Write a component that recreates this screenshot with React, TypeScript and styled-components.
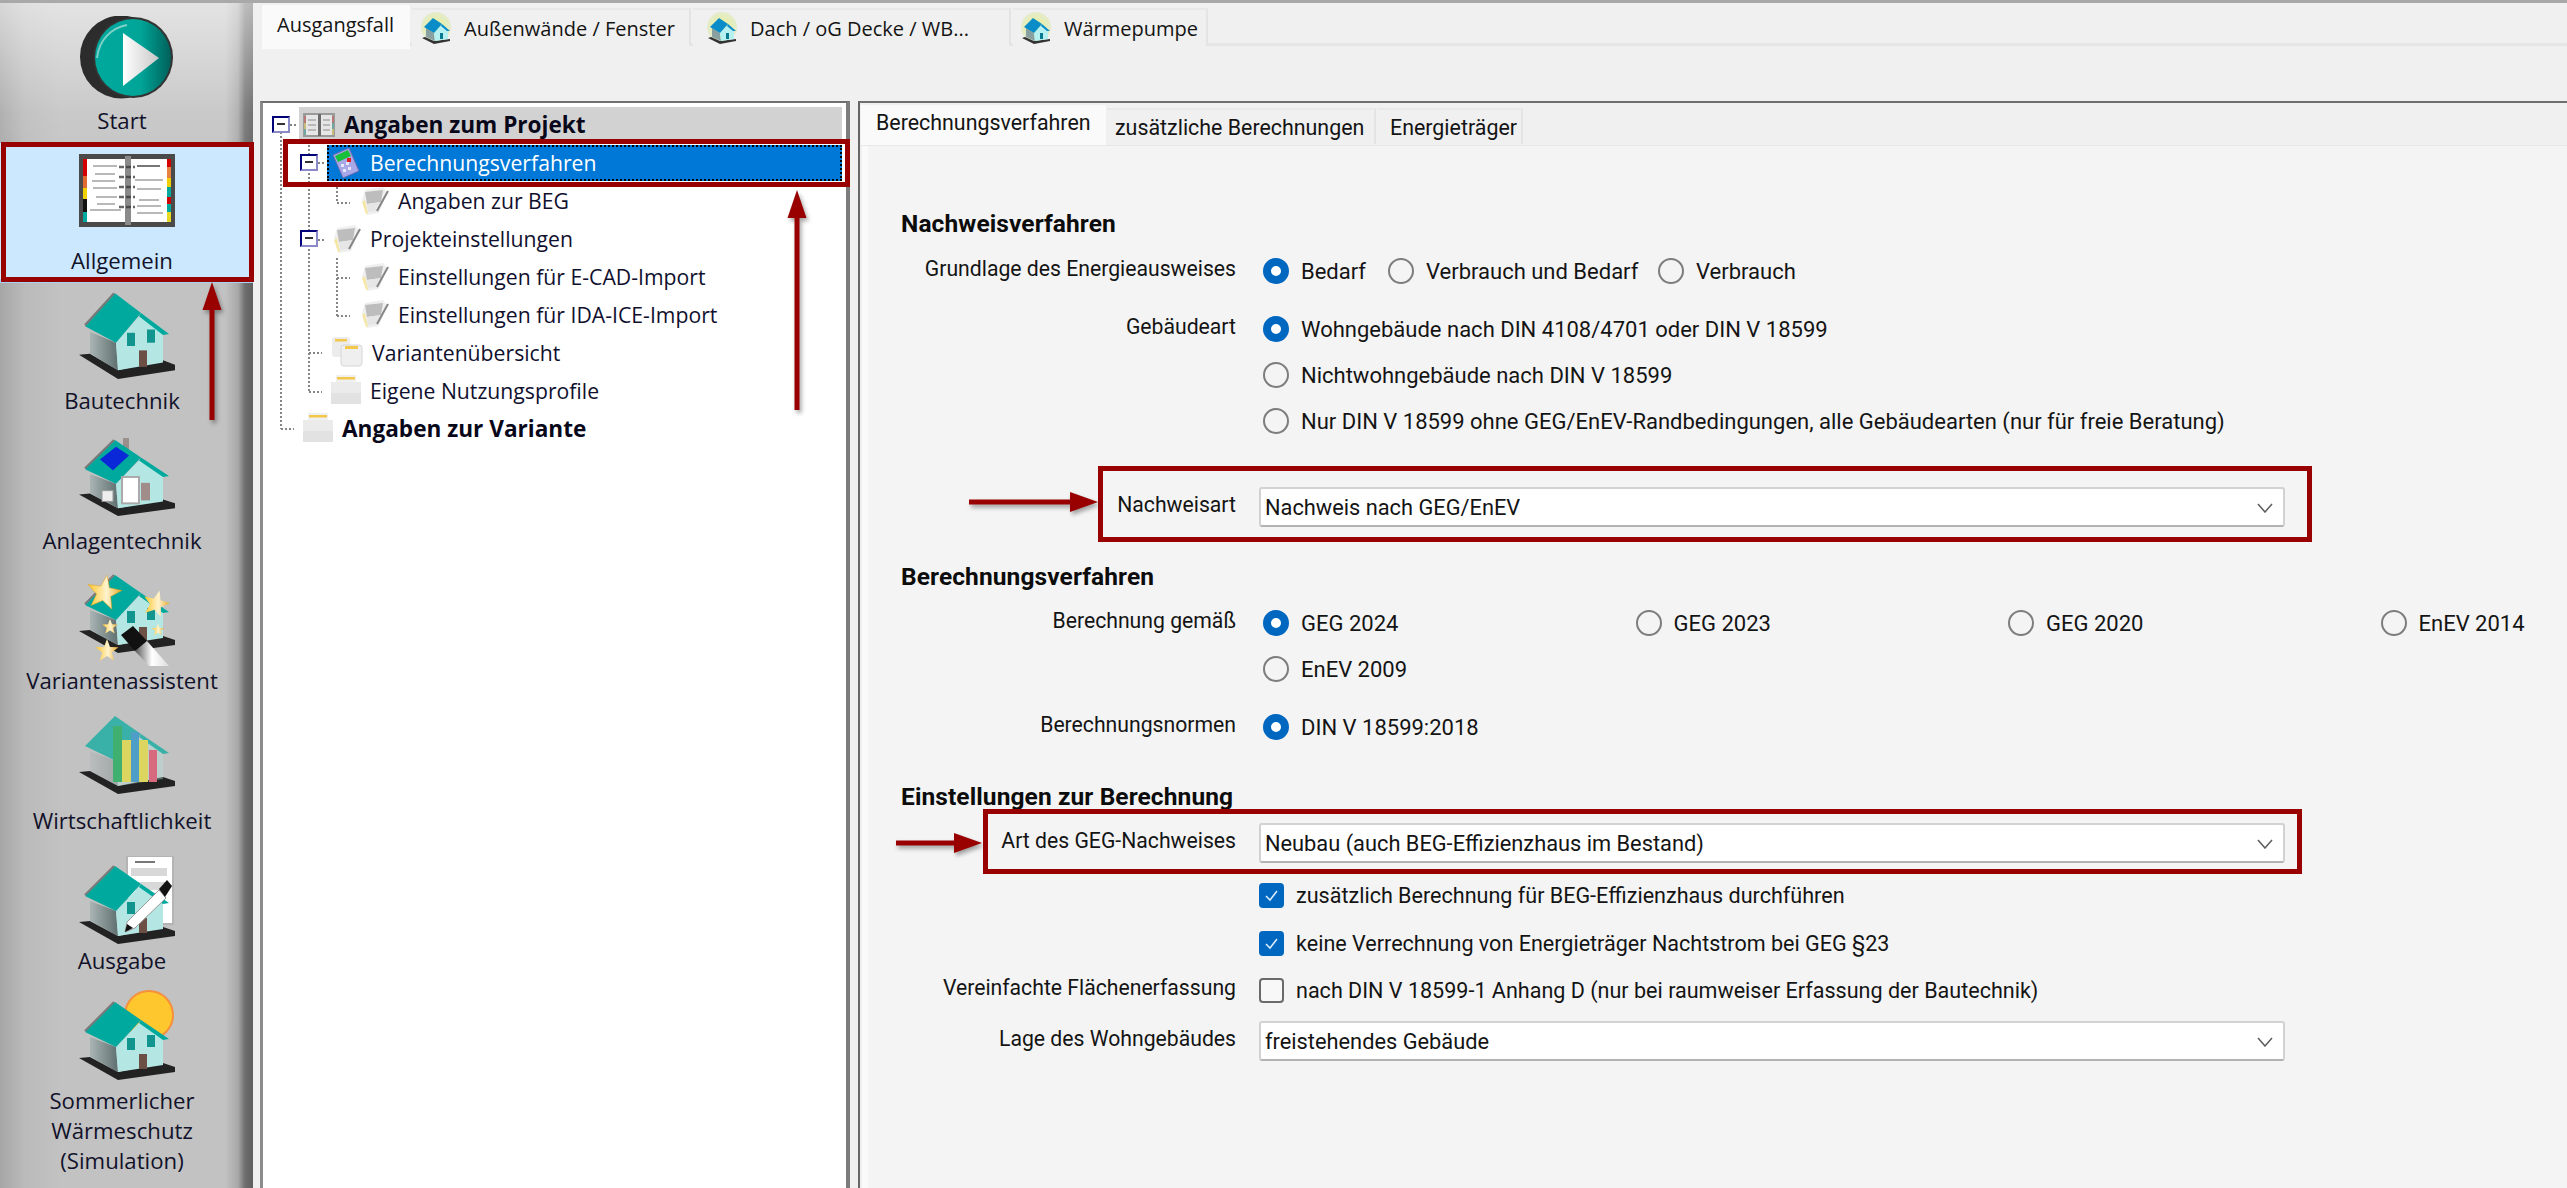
import React from "react";
import styled, { createGlobalStyle } from "styled-components";

const Global = createGlobalStyle`
  html, body { margin: 0; padding: 0; background: #f0f0f0; }
  body { font-family: "Roboto", "Liberation Sans", sans-serif; color: #141414; }
  * { box-sizing: border-box; }
`;

const Page = styled.div`
  position: relative;
  width: 2567px;
  height: 1188px;
  overflow: hidden;
  display: flex;
  border-top: 3px solid #a9a9a9;
  background: #f0f0f0;
`;

/* ---------- sidebar ---------- */
const Sidebar = styled.nav`
  flex: 0 0 253px;
  display: flex;
  flex-direction: column;
  background:
    linear-gradient(to bottom, rgba(255,255,255,.55) 0, rgba(255,255,255,.12) 110px, rgba(255,255,255,0) 200px),
    linear-gradient(to right, #a6a6a6 0, #bababa 24px, #c2c2c2 60px, #c2c2c2 225px, #a8a8a8 238px, #6e6e6e 245px, #5f5f5f 253px);
`;
const NavItem = styled.div<{ $active?: boolean }>`
  flex: 0 0 140px;
  padding-right: 9px;
  text-align: center;
  background: ${(p) => (p.$active ? "#cce8ff" : "transparent")};
  box-shadow: ${(p) => (p.$active ? "inset 0 -8px 0 -4px #a8d2f5" : "none")};
`;
const NavIcon = styled.div<{ $top: number }>`
  height: 103px;
  padding-top: ${(p) => p.$top}px;
  padding-left: 9px;
  display: flex;
  justify-content: center;
  align-items: flex-start;
`;
const NavLabel = styled.div`
  font-family: "Open Sans", "Liberation Sans", sans-serif;
  font-size: 22.2px;
  line-height: 30px;
  color: #12122a;
`;

/* ---------- main ---------- */
const Main = styled.main`
  flex: 1;
  min-width: 0;
  display: flex;
  flex-direction: column;
  padding-left: 7px;
`;
const TopTabs = styled.div`
  flex: 0 0 98px;
  display: flex;
  align-items: flex-start;
  padding: 2px 0 0 2px;
`;
const TopStrip = styled.div`
  flex: 1;
  height: 41px;
  display: flex;
  align-items: flex-start;
  border-bottom: 3px solid #e6e6e6;
`;
const TopActive = styled.div`
  flex: 0 0 148px;
  height: 44px;
  background: #fafafa;
  padding: 0 0 0 15px;
  font-size: 20px;
  line-height: 40px;
  font-family: "Open Sans", sans-serif;
`;
const TopTab = styled.div<{ $w: number; $pad: number }>`
  flex: 0 0 ${(p) => p.$w}px;
  height: 38px;
  margin-top: 3px;
  margin-left: 2px;
  display: flex;
  align-items: center;
  gap: 12px;
  padding-left: ${(p) => p.$pad}px;
  background: #f0f0f0;
  border-right: 2px solid #e4e4e4;
  border-top: 2px solid #e8e8e8;
  white-space: nowrap;
  overflow: hidden;
  font-family: "Open Sans", sans-serif;
  font-size: 20px;
`;
const Work = styled.div`
  flex: 1;
  min-height: 0;
  display: flex;
  gap: 8px;
`;

/* ---------- tree ---------- */
const Tree = styled.section`
  position: relative;
  flex: 0 0 590px;
  background: #fff;
  border-top: 2px solid #6f6f6f;
  border-left: 3px solid #8c8c8c;
  border-right: 4px solid #7c7c7c;
  padding: 3px 4px 0 0;
  font-family: "Open Sans", "Liberation Sans", sans-serif;
  font-size: 21.2px;
`;
const TreeLines = styled.svg`
  position: absolute;
  left: 0;
  top: 0;
  width: 583px;
  height: 420px;
`;
const TreeRow = styled.div<{ $depth: number }>`
  position: relative;
  height: 37.9px;
  display: flex;
  align-items: center;
  padding-left: ${(p) => 9 + 28 * p.$depth}px;
`;
const Expander = styled.span<{ $hidden?: boolean }>`
  flex: 0 0 18px;
  height: 17px;
  position: relative;
  background: #fff;
  border: 2px solid;
  border-color: #00007a #8a8ac8 #8a8ac8 #00007a;
  visibility: ${(p) => (p.$hidden ? "hidden" : "visible")};
  &::after {
    content: "";
    position: absolute;
    left: 3px;
    right: 3px;
    top: 5px;
    height: 2px;
    background: #333;
  }
`;
const TreeBody = styled.div<{ $state?: "root" | "selected" }>`
  flex: 1;
  height: 36px;
  margin-left: 9px;
  padding-left: 4px;
  display: flex;
  align-items: center;
  gap: 9px;
  color: ${(p) => (p.$state === "selected" ? "#fff" : "#10102e")};
  background: ${(p) => (p.$state === "selected" ? "#0078d7" : p.$state === "root" ? "#d2d2d2" : "transparent")};
  outline: ${(p) => (p.$state === "selected" ? "2px dotted #000" : "none")};
  outline-offset: -2px;
`;
const TreeText = styled.span<{ $bold?: boolean }>`
  font-weight: ${(p) => (p.$bold ? 700 : 400)};
  font-size: ${(p) => (p.$bold ? "22.6px" : "inherit")};
  color: ${(p) => (p.$bold ? "#08081a" : "inherit")};
  white-space: nowrap;
`;

/* ---------- right pane ---------- */
const Pane = styled.section`
  flex: 1;
  min-width: 0;
  display: flex;
  flex-direction: column;
  border-top: 2px solid #6f6f6f;
  border-left: 2px solid #666;
`;
const PaneTabs = styled.div`
  flex: 0 0 42px;
  display: flex;
  align-items: flex-start;
  padding: 2px 0 0 1px;
  font-size: 21.4px;
  border-bottom: 1px solid #e8e8e8;
`;
const PaneTabActive = styled.div`
  flex: 0 0 245px;
  height: 40px;
  background: #fafafa;
  padding-left: 15px;
  line-height: 36px;
`;
const PaneTab = styled.div<{ $w: number; $pad: number }>`
  flex: 0 0 ${(p) => p.$w}px;
  height: 36px;
  margin-top: 3px;
  margin-left: 1px;
  padding-left: ${(p) => p.$pad}px;
  line-height: 36px;
  background: #f0f0f0;
  border-top: 2px solid #e8e8e8;
  border-right: 2px solid #e4e4e4;
  white-space: nowrap;
`;
const Content = styled.div`
  flex: 1;
  margin-left: 2px;
  padding-top: 60px;
  background: #f4f4f4;
  border-left: 6px solid #fafafa;
`;
const Heading = styled.h3<{ $h: number }>`
  margin: 0;
  height: ${(p) => p.$h}px;
  padding: 0 0 2px 33px;
  display: flex;
  align-items: center;
  font-size: 24.5px;
  letter-spacing: 0.1px;
  font-weight: 700;
  color: #0c0c0c;
`;
const Row = styled.div<{ $h: number }>`
  height: ${(p) => p.$h}px;
  display: flex;
  align-items: center;
`;
const Label = styled.label`
  flex: 0 0 368px;
  text-align: right;
  margin-top: -6px;
  white-space: nowrap;
  font-size: 21.2px;
`;
const Controls = styled.div`
  flex: 1;
  margin-left: 23px;
  display: flex;
  align-items: center;
  min-width: 0;
`;
const Option = styled.span<{ $w?: number }>`
  flex: 0 0 ${(p) => (p.$w ? `${p.$w}px` : "auto")};
  display: flex;
  align-items: center;
  gap: 12px;
  white-space: nowrap;
  padding-left: 4px;
  font-size: 22px;
`;
const Radio = styled.span<{ $on?: boolean }>`
  flex: 0 0 26px;
  height: 26px;
  border-radius: 50%;
  background: ${(p) => (p.$on ? "#fff" : "transparent")};
  border: ${(p) => (p.$on ? "8px solid #0067c0" : "2px solid #7d7d7d")};
`;
const CheckOption = styled.span`
  display: flex;
  align-items: center;
  gap: 12px;
  white-space: nowrap;
  font-size: 21.55px;
`;
const CheckBox = styled.span<{ $on?: boolean }>`
  flex: 0 0 25px;
  height: 25px;
  border-radius: 4px;
  display: flex;
  align-items: center;
  justify-content: center;
  background: ${(p) => (p.$on ? "#0067c0" : "#f8f8f8")};
  border: 2px solid ${(p) => (p.$on ? "#0067c0" : "#6a6a6a")};
`;
const Select = styled.div`
  flex: 0 0 1026px;
  height: 40px;
  display: flex;
  align-items: center;
  justify-content: space-between;
  padding: 1px 10px 0 4px;
  background: #fff;
  border: 2px solid #d2d2d2;
  border-bottom: 2px solid #b2b2b2;
  border-radius: 3px;
  font-size: 21.8px;
`;

/* ---------- annotations, lying over the content ---------- */
const RedBox = styled.div<{ $x: number; $y: number; $w: number; $h: number }>`
  position: absolute;
  left: ${(p) => p.$x}px;
  top: ${(p) => p.$y - 3}px;
  width: ${(p) => p.$w}px;
  height: ${(p) => p.$h}px;
  border: 5px solid #990000;
  pointer-events: none;
`;
const ArrowSvg = styled.svg<{ $x: number; $y: number }>`
  position: absolute;
  left: ${(p) => p.$x}px;
  top: ${(p) => p.$y - 3}px;
  overflow: visible;
  filter: drop-shadow(2px 3px 2px rgba(0, 0, 0, 0.35));
`;
const SharedDefs = styled.svg`
  position: absolute;
  width: 0;
  height: 0;
`;

/* ---------- drawings ---------- */
const Defs = () => (
  <SharedDefs aria-hidden>
    <defs>
      <linearGradient id="wallL" x1="0" x2="1">
        <stop offset="0" stopColor="#aab4b4" />
        <stop offset="1" stopColor="#5f7070" />
      </linearGradient>
      <linearGradient id="teal" x1="0" x2="1">
        <stop offset="0" stopColor="#00a99d" />
        <stop offset=".6" stopColor="#00a598" />
        <stop offset="1" stopColor="#00605a" />
      </linearGradient>
      <linearGradient id="tri" x1="0" x2="1">
        <stop offset="0" stopColor="#ffffff" />
        <stop offset="1" stopColor="#c8c8c8" />
      </linearGradient>
      <linearGradient id="star" x1="0" x2="1">
        <stop offset="0" stopColor="#ffc62a" />
        <stop offset=".55" stopColor="#fff3cf" />
        <stop offset="1" stopColor="#e8a820" />
      </linearGradient>
      <linearGradient id="brush" x1="0" x2="1">
        <stop offset="0" stopColor="#555" />
        <stop offset=".5" stopColor="#fff" />
        <stop offset="1" stopColor="#ddd" />
      </linearGradient>
      <radialGradient id="glow">
        <stop offset="0" stopColor="#f4f48a" />
        <stop offset="1" stopColor="#d8e8a8" stopOpacity=".5" />
      </radialGradient>
    </defs>
  </SharedDefs>
);

const starPts = (cx: number, cy: number, r: number, rot = -90) => {
  const pts: string[] = [];
  for (let i = 0; i < 10; i++) {
    const rad = i % 2 ? r * 0.42 : r;
    const a = ((rot + i * 36) * Math.PI) / 180;
    pts.push(`${(cx + rad * Math.cos(a)).toFixed(1)},${(cy + rad * Math.sin(a)).toFixed(1)}`);
  }
  return pts.join(" ");
};

const HouseBody = ({ fade }: { fade?: boolean }) => (
  <>
    <polygon points="0,58 39,80 96,72 96,67 84,63 39,72 11,57" fill="#222" />
    <polygon points="11,37 37,47 39,72 11,57" fill="url(#wallL)" opacity={fade ? 0.35 : 1} />
    <polygon points="37,47 61,22 84,39 84,65 39,72" fill="#b4e6e3" opacity={fade ? 0.35 : 1} />
    <polygon points="6,32 36,2 62,20 37,47" fill="#00a99d" opacity={fade ? 0.7 : 1} />
    <polyline points="6,31 35,2" stroke="#777" strokeWidth="2" fill="none" opacity={fade ? 0 : 1} />
    <polygon points="62,20 90,39 84,40 60,23" fill="#00a99d" opacity={fade ? 0.7 : 1} />
  </>
);
const Openings = () => (
  <>
    <rect x="48" y="38" width="8" height="12" fill="#12958f" />
    <rect x="68" y="35" width="8" height="12" fill="#12958f" />
    <rect x="60" y="54" width="8" height="15" fill="#6c4f45" />
  </>
);

const StartIcon = () => (
  <svg width="95" height="83" viewBox="0 0 95 83">
    <ellipse cx="42" cy="41" rx="41" ry="41.5" fill="#2c2c2c" />
    <ellipse cx="54" cy="41.5" rx="40" ry="40.5" fill="#333" />
    <ellipse cx="54" cy="41.5" rx="38" ry="38.5" fill="url(#teal)" />
    <path d="M18 42 C 20 24, 32 12, 48 9" stroke="#7fd0c8" strokeWidth="2" fill="none" />
    <polygon points="44,17 80,42 44,70" fill="url(#tri)" />
  </svg>
);

const BookIcon = () => (
  <svg width="96" height="73" viewBox="0 0 96 73">
    <rect x="0" y="0" width="96" height="73" fill="#4a4a4a" />
    <rect x="8" y="5" width="40" height="63" fill="#fff" />
    <rect x="52" y="5" width="36" height="63" fill="#fff" />
    {[["#d40000", 5, 17], ["#e06a30", 22, 12], ["#f0d000", 34, 11], ["#111", 45, 13], ["#00a99d", 58, 10]].map(([c, y, h]) => (
      <rect key={String(y)} x="4" y={y as number} width="4" height={h as number} fill={c as string} />
    ))}
    {[["#d40000", 5, 8], ["#e88040", 13, 11], ["#f0d000", 24, 9], ["#00a99d", 33, 10], ["#d40000", 43, 7], ["#00a99d", 50, 8], ["#e8d820", 58, 10]].map(([c, y, h]) => (
      <rect key={String(y)} x="88" y={y as number} width="4" height={h as number} fill={c as string} />
    ))}
    <rect x="46" y="2" width="6" height="69" fill="#8a8a8a" />
    <g stroke="#b8b8b8" strokeWidth="2">
      <path d="M14 12H38M16 20H36M13 27H36M14 34H38M17 43H38M18 50H36M11 56H42" />
      <path d="M58 12H81" stroke="#777" />
      <path d="M56 26H84M58 35H82M60 46H80M58 52H82M58 59H84" />
    </g>
    <g stroke="#333" strokeWidth="2.4" strokeDasharray="5 2">
      <path d="M40 13H56M40 23H56M40 33H56M40 43H56M40 53H56" strokeOpacity=".75" />
    </g>
  </svg>
);

const BauIcon = () => (
  <svg width="96" height="88" viewBox="0 0 96 80" preserveAspectRatio="none">
    <HouseBody />
    <Openings />
  </svg>
);
const AnlagenIcon = () => (
  <svg width="96" height="78" viewBox="0 0 96 80" preserveAspectRatio="none">
    <rect x="44" y="0" width="6" height="22" fill="#9a8f8a" />
    <HouseBody />
    <polygon points="21,22 37,9 50,18 34,33" fill="#0a28d8" />
    <rect x="43" y="40" width="17" height="27" fill="#fff" stroke="#aaa" strokeWidth="2" />
    <rect x="62" y="46" width="9" height="18" fill="#a08c88" />
    <rect x="23" y="54" width="11" height="11" fill="#eee" stroke="#999" />
  </svg>
);
const VarIcon = () => (
  <svg width="96" height="93" viewBox="0 0 96 93">
    <HouseBody />
    <Openings />
    <polygon points={starPts(25, 20, 18, -80)} fill="url(#star)" stroke="#e0a010" strokeWidth=".5" />
    <polygon points={starPts(77, 31, 14, -75)} fill="url(#star)" />
    <polygon points={starPts(31, 54, 8)} fill="url(#star)" />
    <polygon points={starPts(79, 57, 6.5)} fill="url(#star)" />
    <polygon points={starPts(28, 78, 12)} fill="url(#star)" />
    <polygon points="42,62 54,53 68,68 56,78" fill="#111" />
    <polygon points="56,78 68,68 90,93 70,93" fill="url(#brush)" />
  </svg>
);
const WirtIcon = () => (
  <svg width="96" height="80" viewBox="0 0 96 80">
    <HouseBody fade />
    <rect x="34" y="12" width="9" height="56" fill="#3fb070" />
    <rect x="43" y="26" width="9" height="42" fill="#dcd660" />
    <rect x="52" y="18" width="8" height="50" fill="#4f9ec8" />
    <rect x="60" y="26" width="9" height="42" fill="#dcd660" />
    <rect x="70" y="36" width="8" height="32" fill="#d86a80" />
  </svg>
);
const AusgabeIcon = () => (
  <svg width="96" height="88" viewBox="0 0 96 88">
    <rect x="48" y="0" width="46" height="68" fill="#fff" stroke="#b4b4b4" strokeWidth="2" />
    <path d="M56 6H76" stroke="#777" strokeWidth="2" />
    <rect x="52" y="12" width="36" height="8" fill="#d8d8d8" />
    <rect x="52" y="26" width="36" height="8" fill="#d8d8d8" />
    <g transform="translate(0,8)">
      <HouseBody />
      <rect x="48" y="38" width="8" height="12" fill="#12958f" />
      <rect x="60" y="54" width="8" height="15" fill="#6c4f45" />
    </g>
    <polygon points="46,76 48,66 80,34 87,42 56,72" fill="#fff" stroke="#999" />
    <polygon points="46,76 48,68 54,72" fill="#111" />
    <polygon points="80,33 88,24 93,30 86,41" fill="#111" />
  </svg>
);
const SommerIcon = () => (
  <svg width="96" height="91" viewBox="0 0 96 91">
    <circle cx="70" cy="25" r="24" fill="#ffc72e" stroke="#f5913c" strokeWidth="2" />
    <g transform="translate(0,10)">
      <HouseBody />
      <Openings />
    </g>
  </svg>
);

const MiniHouse = () => (
  <svg width="32" height="32" viewBox="0 0 32 32">
    <circle cx="16" cy="15" r="15" fill="url(#glow)" />
    <polygon points="2,26 14,32 30,29 30,27 14,29 5,25" fill="#333" />
    <polygon points="6,16 14,21 15,29 6,25" fill="#88a0a0" />
    <polygon points="14,21 22,12 28,18 28,27 15,29" fill="#b6f0f0" />
    <polygon points="4,15 13,6 22,12 14,21" fill="#0a8cc8" />
    <polygon points="22,12 30,19 27,19 21,14" fill="#0a8cc8" />
    <rect x="20" y="21" width="3" height="6" fill="#0a7a90" />
  </svg>
);
const NoteIcon = () => (
  <svg width="30" height="30" viewBox="0 0 30 30">
    <polygon points="6,4 24,1 28,6 20,27 8,29 3,14" fill="#efefef" />
    <polygon points="6,6 24,4 22,16 8,18" fill="#bdbdbd" />
    <polygon points="8,18 22,16 19,25 9,26" fill="#e6e6e6" />
    <polygon points="3,16 7,28 9,28 6,14" fill="#f5e7a5" />
    <path d="M29 5 L18 25" stroke="#858585" strokeWidth="2" />
  </svg>
);
const BoxIcon = () => (
  <svg width="30" height="30" viewBox="0 0 30 30">
    <rect x="5" y="0" width="20" height="8" fill="#f0f0f0" />
    <rect x="6" y="2" width="18" height="2.5" fill="#f2c74a" />
    <rect x="0" y="7" width="30" height="22" fill="#ebebeb" />
    <rect x="0" y="18" width="30" height="11" fill="#e2e2e2" />
  </svg>
);
const StackIcon = () => (
  <svg width="32" height="30" viewBox="0 0 32 30">
    <rect x="1" y="0" width="18" height="20" rx="3" fill="#ececec" />
    <rect x="4" y="2" width="12" height="2.5" fill="#f2c74a" />
    <rect x="10" y="8" width="21" height="21" rx="3" fill="#efefef" stroke="#d6d6d6" />
    <rect x="14" y="9" width="13" height="3" fill="#f2c74a" />
  </svg>
);
const CalcIcon = () => (
  <svg width="30" height="32" viewBox="0 0 30 32">
    <polygon points="2,8 18,1 28,24 12,31" fill="#a8a8e8" stroke="#6a6ab0" />
    <polygon points="4,9 17,3 20,9 7,15" fill="#19c03a" />
    <rect x="16" y="11" width="4" height="4" fill="#e02020" />
    <g fill="#e6e6ff">
      <rect x="10" y="17" width="3" height="3" />
      <rect x="15" y="15" width="3" height="3" />
      <rect x="12" y="22" width="3" height="3" />
      <rect x="17" y="20" width="3" height="3" />
    </g>
  </svg>
);
const RootBook = () => (
  <svg width="32" height="24" viewBox="0 0 32 24">
    <rect width="32" height="24" fill="#9a9a9a" />
    <rect x="3" y="2" width="12" height="20" fill="#e6e6e6" />
    <rect x="18" y="2" width="11" height="20" fill="#e6e6e6" />
    <g stroke="#aaa" strokeWidth="1.4">
      <path d="M5 7H13M5 12H13M5 17H13M20 7H27M20 12H27M20 17H27" />
    </g>
    <rect x="15" y="1" width="3" height="22" fill="#6a6a6a" />
    <rect x="1" y="3" width="2" height="7" fill="#b87878" />
    <rect x="1" y="10" width="2" height="6" fill="#c8bc78" />
    <rect x="1" y="16" width="2" height="6" fill="#70a8a0" />
    <rect x="29" y="3" width="2" height="7" fill="#b87878" />
    <rect x="29" y="10" width="2" height="6" fill="#70a8a0" />
    <rect x="29" y="16" width="2" height="6" fill="#c8bc78" />
  </svg>
);
const Chevron = () => (
  <svg width="16" height="10" viewBox="0 0 16 10">
    <polyline points="1,1 8,9 15,1" fill="none" stroke="#5c5c5c" strokeWidth="1.5" />
  </svg>
);
const Tick = () => (
  <svg width="15" height="13" viewBox="0 0 15 13">
    <polyline points="2,7 6,11 13,2" fill="none" stroke="#dfeeff" strokeWidth="1.5" />
  </svg>
);
const ArrowUp = ({ x, y, len }: { x: number; y: number; len: number }) => (
  <ArrowSvg $x={x} $y={y} width="20" height={len} viewBox={`0 0 20 ${len}`}>
    <polygon points="10,0 19.5,28 0.5,28" fill="#990000" />
    <rect x="7.5" y="26" width="5" height={len - 26} fill="#990000" />
  </ArrowSvg>
);
const ArrowRight = ({ x, y, len }: { x: number; y: number; len: number }) => (
  <ArrowSvg $x={x} $y={y} width={len} height="20" viewBox={`0 0 ${len} 20`}>
    <rect x="0" y="7.5" width={len - 26} height="5" fill="#990000" />
    <polygon points={`${len - 28},0 ${len},10 ${len - 28},20`} fill="#990000" />
  </ArrowSvg>
);

const navItems: { label: React.ReactNode; top: number; icon: React.ReactNode; active?: boolean }[] = [
  { label: "Start", top: 13, icon: <StartIcon /> },
  { label: "Allgemein", top: 11, icon: <BookIcon />, active: true },
  { label: "Bautechnik", top: 8, icon: <BauIcon /> },
  { label: "Anlagentechnik", top: 15, icon: <AnlagenIcon /> },
  { label: "Variantenassistent", top: 10, icon: <VarIcon /> },
  { label: "Wirtschaftlichkeit", top: 11, icon: <WirtIcon /> },
  { label: "Ausgabe", top: 13, icon: <AusgabeIcon /> },
  { label: <>Sommerlicher<br />Wärmeschutz<br />(Simulation)</>, top: 7, icon: <SommerIcon /> },
];

const treeRows: { depth: number; text: string; icon: React.ReactNode; exp?: boolean; bold?: boolean; state?: "root" | "selected" }[] = [
  { depth: 0, text: "Angaben zum Projekt", icon: <RootBook />, exp: true, bold: true, state: "root" },
  { depth: 1, text: "Berechnungsverfahren", icon: <CalcIcon />, exp: true, state: "selected" },
  { depth: 2, text: "Angaben zur BEG", icon: <NoteIcon /> },
  { depth: 1, text: "Projekteinstellungen", icon: <NoteIcon />, exp: true },
  { depth: 2, text: "Einstellungen für E-CAD-Import", icon: <NoteIcon /> },
  { depth: 2, text: "Einstellungen für IDA-ICE-Import", icon: <NoteIcon /> },
  { depth: 1, text: "Variantenübersicht", icon: <StackIcon /> },
  { depth: 1, text: "Eigene Nutzungsprofile", icon: <BoxIcon /> },
  { depth: 0, text: "Angaben zur Variante", icon: <BoxIcon />, bold: true },
];

const RadioOpt = ({ on, w, children }: { on?: boolean; w?: number; children: React.ReactNode }) => (
  <Option $w={w}>
    <Radio $on={on} />
    {children}
  </Option>
);

export default function App() {
  /* tree connector coordinates are page pixels, minus the tree's padding box origin */
  const ox = 263;
  const oy = 103;
  const seg = (x1: number, y1: number, x2: number, y2: number) => `M${x1 - ox} ${y1 - oy}L${x2 - ox} ${y2 - oy}`;
  const lines = [
    seg(281, 132, 281, 429), seg(281, 429, 294, 429), seg(290, 125, 296, 125),
    seg(309, 145, 309, 392), seg(309, 392, 322, 392), seg(309, 353, 322, 353),
    seg(318, 163, 324, 163), seg(318, 240, 324, 240),
    seg(337, 187, 337, 203), seg(337, 203, 350, 203),
    seg(337, 258, 337, 316), seg(337, 278, 350, 278), seg(337, 316, 350, 316),
  ].join("");

  return (
    <Page>
      <Global />
      <Defs />
      <Sidebar>
        {navItems.map((n, i) => (
          <NavItem key={i} $active={n.active}>
            <NavIcon $top={n.top}>{n.icon}</NavIcon>
            <NavLabel>{n.label}</NavLabel>
          </NavItem>
        ))}
      </Sidebar>

      <Main>
        <TopTabs>
          <TopActive>Ausgangsfall</TopActive>
          <TopStrip>
            <TopTab $w={279} $pad={8}><MiniHouse />Außenwände / Fenster</TopTab>
            <TopTab $w={318} $pad={13}><MiniHouse />Dach / oG Decke / WB...</TopTab>
            <TopTab $w={195} $pad={7}><MiniHouse />Wärmepumpe</TopTab>
          </TopStrip>
        </TopTabs>
        <Work>
          <Tree>
            <TreeLines viewBox="0 0 583 420">
              <path d={lines} stroke="#858585" strokeWidth="2" strokeDasharray="2 2" fill="none" />
            </TreeLines>
            {treeRows.map((r, i) => (
              <TreeRow key={i} $depth={r.depth}>
                <Expander $hidden={!r.exp} />
                <TreeBody $state={r.state}>
                  {r.icon}
                  <TreeText $bold={r.bold}>{r.text}</TreeText>
                </TreeBody>
              </TreeRow>
            ))}
          </Tree>

          <Pane>
            <PaneTabs>
              <PaneTabActive>Berechnungsverfahren</PaneTabActive>
              <PaneTab $w={269} $pad={8}>zusätzliche Berechnungen</PaneTab>
              <PaneTab $w={146} $pad={13}>Energieträger</PaneTab>
            </PaneTabs>
            <Content>
              <Heading $h={36}>Nachweisverfahren</Heading>
              <Row $h={58}>
                <Label>Grundlage des Energieausweises</Label>
                <Controls>
                  <RadioOpt on w={125}>Bedarf</RadioOpt>
                  <RadioOpt w={270}>Verbrauch und Bedarf</RadioOpt>
                  <RadioOpt>Verbrauch</RadioOpt>
                </Controls>
              </Row>
              <Row $h={58}>
                <Label>Gebäudeart</Label>
                <Controls><RadioOpt on>Wohngebäude nach DIN 4108/4701 oder DIN V 18599</RadioOpt></Controls>
              </Row>
              <Row $h={34}>
                <Label />
                <Controls><RadioOpt>Nichtwohngebäude nach DIN V 18599</RadioOpt></Controls>
              </Row>
              <Row $h={58}>
                <Label />
                <Controls><RadioOpt>Nur DIN V 18599 ohne GEG/EnEV-Randbedingungen, alle Gebäudearten (nur für freie Beratung)</RadioOpt></Controls>
              </Row>
              <Row $h={114}>
                <Label>Nachweisart</Label>
                <Controls><Select>Nachweis nach GEG/EnEV<Chevron /></Select></Controls>
              </Row>
              <Heading $h={26}>Berechnungsverfahren</Heading>
              <Row $h={66}>
                <Label>Berechnung gemäß</Label>
                <Controls>
                  <RadioOpt on w={372.5}>GEG 2024</RadioOpt>
                  <RadioOpt w={372.5}>GEG 2023</RadioOpt>
                  <RadioOpt w={372.5}>GEG 2020</RadioOpt>
                  <RadioOpt>EnEV 2014</RadioOpt>
                </Controls>
              </Row>
              <Row $h={26}>
                <Label />
                <Controls><RadioOpt>EnEV 2009</RadioOpt></Controls>
              </Row>
              <Row $h={90}>
                <Label>Berechnungsnormen</Label>
                <Controls><RadioOpt on>DIN V 18599:2018</RadioOpt></Controls>
              </Row>
              <Heading $h={51}>Einstellungen zur Berechnung</Heading>
              <Row $h={40}>
                <Label>Art des GEG-Nachweises</Label>
                <Controls><Select>Neubau (auch BEG-Effizienzhaus im Bestand)<Chevron /></Select></Controls>
              </Row>
              <Row $h={64}>
                <Label />
                <Controls><CheckOption><CheckBox $on><Tick /></CheckBox>zusätzlich Berechnung für BEG-Effizienzhaus durchführen</CheckOption></Controls>
              </Row>
              <Row $h={32}>
                <Label />
                <Controls><CheckOption><CheckBox $on><Tick /></CheckBox>keine Verrechnung von Energieträger Nachtstrom bei GEG §23</CheckOption></Controls>
              </Row>
              <Row $h={62}>
                <Label>Vereinfachte Flächenerfassung</Label>
                <Controls><CheckOption><CheckBox />nach DIN V 18599-1 Anhang D (nur bei raumweiser Erfassung der Bautechnik)</CheckOption></Controls>
              </Row>
              <Row $h={40}>
                <Label>Lage des Wohngebäudes</Label>
                <Controls><Select>freistehendes Gebäude<Chevron /></Select></Controls>
              </Row>
            </Content>
          </Pane>
        </Work>
      </Main>

      <RedBox $x={1} $y={142} $w={253} $h={140} />
      <RedBox $x={283} $y={139} $w={567} $h={48} />
      <RedBox $x={1098} $y={466} $w={1214} $h={76} />
      <RedBox $x={983} $y={809} $w={1319} $h={65} />
      <ArrowUp x={202} y={282} len={138} />
      <ArrowUp x={787} y={190} len={220} />
      <ArrowRight x={969} y={492} len={129} />
      <ArrowRight x={896} y={833} len={86} />
    </Page>
  );
}
